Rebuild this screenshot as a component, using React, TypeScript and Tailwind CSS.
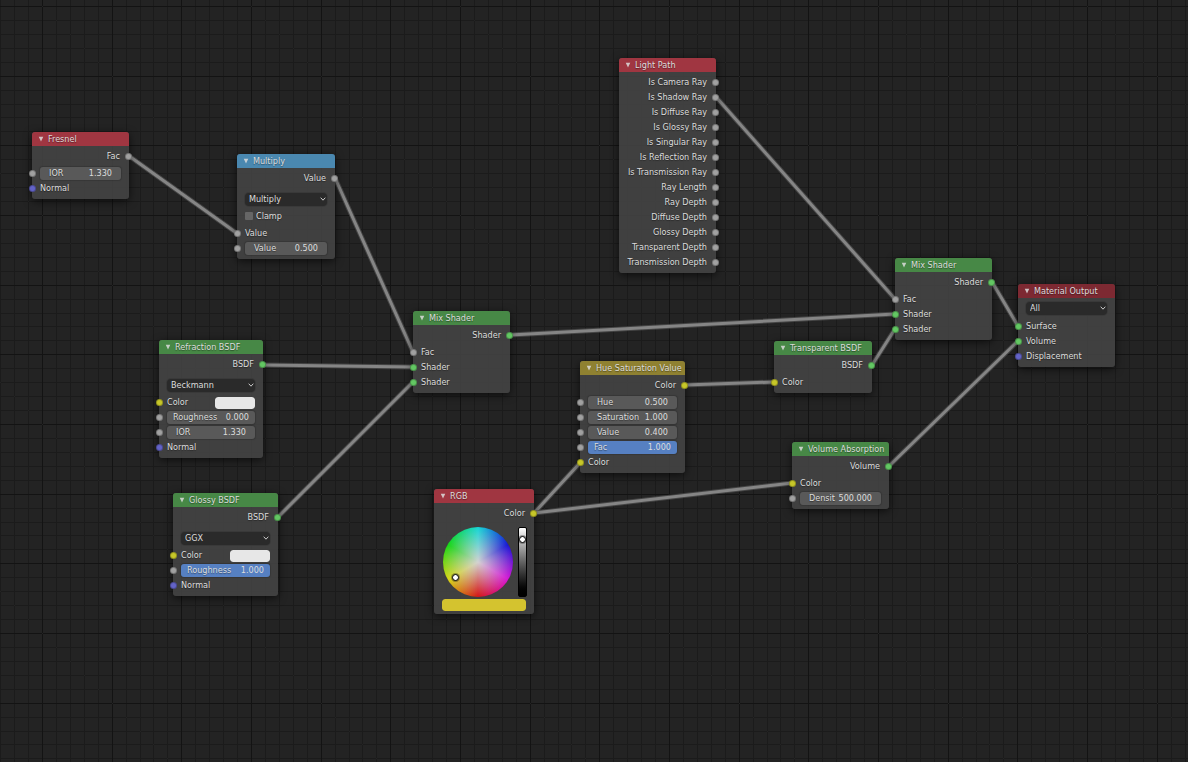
import * as React from "react";
import clsx from "clsx";

const SOCKETS = {
  value: "bg-[#a1a1a1]",
  color: "bg-[#c7c729]",
  shader: "bg-[#63c763]",
  vector: "bg-[#6363c7]",
};

const HEADERS = {
  input: "bg-[#a03641]",
  converter: "bg-[#4a88b0]",
  shader: "bg-[#478846]",
  color: "bg-[#8f8131]",
  output: "bg-[#7d2932]",
};

type SocketType = keyof typeof SOCKETS;

// x1, y1, x2, y2 between socket centres
const LINKS = [
  [129, 156, 238, 234],
  [335, 178, 413, 352],
  [263, 365, 413, 367],
  [278, 517, 413, 382],
  [510, 335, 895, 314],
  [716, 97, 895, 299],
  [685, 385, 774, 382],
  [534, 513, 580, 463],
  [534, 513, 792, 483],
  [872, 365, 895, 329],
  [992, 282, 1018, 326],
  [889, 466, 1018, 341],
];

const LIGHT_PATH_OUTPUTS = [
  "Is Camera Ray",
  "Is Shadow Ray",
  "Is Diffuse Ray",
  "Is Glossy Ray",
  "Is Singular Ray",
  "Is Reflection Ray",
  "Is Transmission Ray",
  "Ray Length",
  "Ray Depth",
  "Diffuse Depth",
  "Glossy Depth",
  "Transparent Depth",
  "Transmission Depth",
];

// The tile holds three major cells, so fractional steps snap to whole pixels
const TILE = 209;
const GRID = Array.from({ length: 15 }, (_, i) => ({ at: Math.round((i * TILE) / 15), major: i % 5 === 0 }));

function Grid() {
  const minor = GRID.filter((l) => !l.major);
  const major = GRID.filter((l) => l.major);
  return (
    <svg className="absolute inset-0 h-full w-full" aria-hidden="true" shapeRendering="crispEdges">
      <defs>
        <pattern id="grid" x="42" y="6" width={TILE} height={TILE} patternUnits="userSpaceOnUse">
          {minor.map((l) => (
            <path key={l.at} d={`M0 ${l.at}h${TILE}v1H0zM${l.at} 0v${TILE}h1V0z`} fill="#1b1b1b" />
          ))}
          {major.map((l) => (
            <path key={l.at} d={`M0 ${l.at}h${TILE}v1H0zM${l.at} 0v${TILE}h1V0z`} fill="#131313" />
          ))}
        </pattern>
      </defs>
      <rect width="100%" height="100%" fill="url(#grid)" />
    </svg>
  );
}

function Links() {
  return (
    <svg className="absolute inset-0 h-full w-full" aria-hidden="true" strokeLinecap="round">
      {LINKS.map(([x1, y1, x2, y2]) => (
        <g key={`${x1}-${y1}-${x2}-${y2}`}>
          <line x1={x1} y1={y1} x2={x2} y2={y2} stroke="#5c5c5c" strokeOpacity="0.6" strokeWidth="5" />
          <line x1={x1} y1={y1} x2={x2} y2={y2} stroke="#858585" strokeWidth="3" />
        </g>
      ))}
    </svg>
  );
}

function Socket({ type, side }: { type: SocketType; side: "left" | "right" }) {
  return (
    <span
      className={clsx(
        "absolute top-1 h-[7px] w-[7px] rounded-full border border-black/25",
        side === "left" ? "-left-[3px]" : "-right-[3px]",
        SOCKETS[type]
      )}
    />
  );
}

function Node({ title, kind, className, children }: { title: string; kind: keyof typeof HEADERS; className: string; children: React.ReactNode }) {
  return (
    <section className={clsx("absolute rounded-[3px] bg-[#444444]/90 pb-[3px] shadow-[0_2px_8px_rgba(0,0,0,0.65)]", className)}>
      <h2 className={clsx("flex h-3.5 items-center rounded-t-[3px] pl-1.5", HEADERS[kind])}>
        <svg viewBox="0 0 12 12" className="mr-1 h-1.5 w-1.5" aria-hidden="true">
          <path d="M1.5 1.5h9L6 11z" fill="#dcdcdc" fillOpacity="0.85" />
        </svg>
        <span className="leading-[14px] whitespace-nowrap">{title}</span>
      </h2>
      {children}
    </section>
  );
}

function Outputs({ children }: { children: React.ReactNode }) {
  return <div className="pt-[3px]">{children}</div>;
}

function Inputs({ tight, children }: { tight?: boolean; children: React.ReactNode }) {
  return <div className={tight ? "pt-px" : "pt-0.5"}>{children}</div>;
}

function Output({ label, type }: { label: string; type: SocketType }) {
  return (
    <div className="relative flex h-[15px] items-center justify-end pr-[9px]">
      {label}
      <Socket type={type} side="right" />
    </div>
  );
}

function Input({ label, type }: { label: string; type: SocketType }) {
  return (
    <div className="relative flex h-[15px] items-center pl-2">
      {label}
      <Socket type={type} side="left" />
    </div>
  );
}

function Field({ label, value, slider, filled }: { label: string; value: string; slider?: boolean; filled?: boolean }) {
  const id = React.useId();
  return (
    <div className="relative flex h-[15px] items-center px-2">
      <Socket type="value" side="left" />
      <div
        className={clsx(
          "flex h-[13px] flex-1 items-center rounded-[3px] shadow-[0_0_1px_1px_rgba(0,0,0,0.15)]",
          slider ? "px-1.5" : "px-[9px]",
          filled ? "bg-[#5680c2]" : "bg-[#595959]"
        )}
      >
        <label htmlFor={id}>{label}</label>
        <input id={id} defaultValue={value} className="h-[13px] w-0 min-w-0 flex-1 bg-transparent text-right outline-none" />
      </div>
    </div>
  );
}

function ColorInput() {
  const id = React.useId();
  return (
    <div className="relative flex h-[15px] items-center justify-between px-2">
      <Socket type="color" side="left" />
      <label htmlFor={id}>Color</label>
      <input
        id={id}
        type="color"
        defaultValue="#e7e7e7"
        className="h-3 w-10 appearance-none rounded-[3px] border-0 bg-transparent p-0 [&::-webkit-color-swatch-wrapper]:p-0 [&::-webkit-color-swatch]:rounded-[3px] [&::-webkit-color-swatch]:border-0"
      />
    </div>
  );
}

function Dropdown({ label, options, top }: { label: string; options: string[]; top?: boolean }) {
  return (
    <div className={clsx("px-2", top ? "pt-px" : "pt-1")}>
      <div className="relative flex h-[18px] items-center">
        <select
          aria-label={label}
          className="h-[13px] w-full appearance-none rounded-[4px] bg-[#2a2a2a] pl-1 leading-[13px] shadow-[0_0_0_1px_#393939] outline-none"
        >
          {options.map((o) => (
            <option key={o}>{o}</option>
          ))}
        </select>
        <svg viewBox="0 0 6 4" className="pointer-events-none absolute right-px h-1 w-1.5" aria-hidden="true">
          <path d="M0.7 0.7L3 3.2L5.3 0.7" fill="none" stroke="#dcdcdc" strokeWidth="0.9" />
        </svg>
      </div>
    </div>
  );
}

function ColorPicker() {
  return (
    <div className="px-2 pt-1.5">
      <div className="flex justify-between pl-px">
        <div className="relative h-[70px] w-[70px] rounded-full bg-[radial-gradient(circle_closest-side,#d2d2d2,#d2d2d200),conic-gradient(from_180deg,#d61414,#d6d614,#14d614,#14d6d6,#1414d6,#d614d6,#d61414)]">
          <span className="absolute top-[47px] left-[9px] h-[7px] w-[7px] rounded-full border border-black bg-white ring-1 ring-black/30" />
        </div>
        <div className="relative -mr-px h-[70px] w-[9px] rounded-[2px] border border-black bg-linear-to-b from-white to-black">
          <span className="absolute top-2 left-0 h-[7px] w-[7px] rounded-full border border-black bg-white ring-1 ring-black/30" />
        </div>
      </div>
      <input
        type="color"
        aria-label="RGB"
        defaultValue="#d4c32f"
        className="mt-0.5 block h-3 w-full appearance-none rounded-[3px] border-0 bg-transparent p-0 [&::-webkit-color-swatch-wrapper]:p-0 [&::-webkit-color-swatch]:rounded-[3px] [&::-webkit-color-swatch]:border-0"
      />
    </div>
  );
}

function MixShader({ className }: { className: string }) {
  return (
    <Node title="Mix Shader" kind="shader" className={className}>
      <Outputs>
        <Output label="Shader" type="shader" />
      </Outputs>
      <Inputs>
        <Input label="Fac" type="value" />
        <Input label="Shader" type="shader" />
        <Input label="Shader" type="shader" />
      </Inputs>
    </Node>
  );
}

export default function App() {
  return (
    <main className="relative min-h-screen overflow-hidden bg-[#232323] font-['DejaVu_Sans_Condensed','DejaVu_Sans',sans-serif] text-[9px] leading-[15px] text-[#dcdcdc] [text-shadow:0_1px_1px_rgba(0,0,0,0.4)]">
      <Grid />
      <Links />

      <Node title="Fresnel" kind="input" className="top-[132px] left-[32px] w-[97px]">
        <Outputs>
          <Output label="Fac" type="value" />
        </Outputs>
        <Inputs>
          <Field label="IOR" value="1.330" />
          <Input label="Normal" type="vector" />
        </Inputs>
      </Node>

      <Node title="Multiply" kind="converter" className="top-[154px] left-[237px] w-[98px]">
        <Outputs>
          <Output label="Value" type="value" />
        </Outputs>
        <Dropdown label="Operation" options={["Multiply", "Add", "Subtract", "Divide"]} />
        <label className="flex h-4 items-center gap-[3px] pl-2">
          <input type="checkbox" className="h-2 w-2 appearance-none rounded-[1px] bg-[#666666] checked:bg-[#5680c2]" />
          Clamp
        </label>
        <Inputs>
          <Input label="Value" type="value" />
          <Field label="Value" value="0.500" />
        </Inputs>
      </Node>

      <Node title="Refraction BSDF" kind="shader" className="top-[340px] left-[159px] w-[104px]">
        <Outputs>
          <Output label="BSDF" type="shader" />
        </Outputs>
        <Dropdown label="Distribution" options={["Beckmann", "Sharp", "GGX"]} />
        <Inputs tight>
          <ColorInput />
          <Field label="Roughness" value="0.000" slider />
          <Field label="IOR" value="1.330" />
          <Input label="Normal" type="vector" />
        </Inputs>
      </Node>

      <Node title="Glossy BSDF" kind="shader" className="top-[493px] left-[173px] w-[105px]">
        <Outputs>
          <Output label="BSDF" type="shader" />
        </Outputs>
        <Dropdown label="Distribution" options={["GGX", "Sharp", "Beckmann"]} />
        <Inputs tight>
          <ColorInput />
          <Field label="Roughness" value="1.000" slider filled />
          <Input label="Normal" type="vector" />
        </Inputs>
      </Node>

      <MixShader className="top-[311px] left-[413px] w-[97px]" />

      <Node title="RGB" kind="input" className="top-[489px] left-[434px] w-[100px]">
        <Outputs>
          <Output label="Color" type="color" />
        </Outputs>
        <ColorPicker />
      </Node>

      <Node title="Hue Saturation Value" kind="color" className="top-[361px] left-[580px] w-[105px]">
        <Outputs>
          <Output label="Color" type="color" />
        </Outputs>
        <Inputs>
          <Field label="Hue" value="0.500" />
          <Field label="Saturation" value="1.000" />
          <Field label="Value" value="0.400" />
          <Field label="Fac" value="1.000" slider filled />
          <Input label="Color" type="color" />
        </Inputs>
      </Node>

      <Node title="Light Path" kind="input" className="top-[58px] left-[619px] w-[97px]">
        <Outputs>
          {LIGHT_PATH_OUTPUTS.map((label) => (
            <Output key={label} label={label} type="value" />
          ))}
        </Outputs>
      </Node>

      <Node title="Transparent BSDF" kind="shader" className="top-[341px] left-[774px] w-[98px]">
        <Outputs>
          <Output label="BSDF" type="shader" />
        </Outputs>
        <Inputs>
          <Input label="Color" type="color" />
        </Inputs>
      </Node>

      <Node title="Volume Absorption" kind="shader" className="top-[442px] left-[792px] w-[97px]">
        <Outputs>
          <Output label="Volume" type="shader" />
        </Outputs>
        <Inputs>
          <Input label="Color" type="color" />
          <Field label="Densit" value="500.000" />
        </Inputs>
      </Node>

      <MixShader className="top-[258px] left-[895px] w-[97px]" />

      <Node title="Material Output" kind="output" className="top-[284px] left-[1018px] w-[97px]">
        <Dropdown label="Target" options={["All", "Eevee", "Cycles"]} top />
        <Inputs>
          <Input label="Surface" type="shader" />
          <Input label="Volume" type="shader" />
          <Input label="Displacement" type="vector" />
        </Inputs>
      </Node>
    </main>
  );
}
